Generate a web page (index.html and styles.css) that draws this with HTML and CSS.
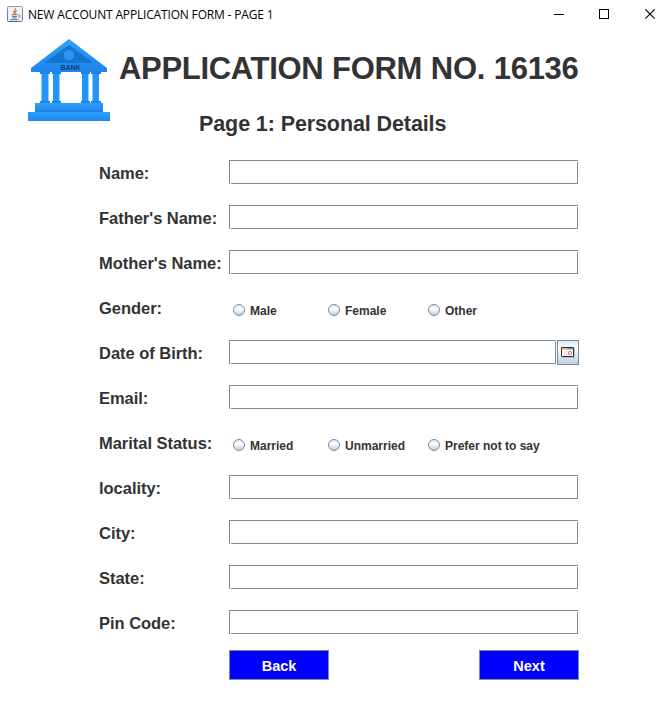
FILE: index.html
```html
<!DOCTYPE html>
<html lang="en">
<head>
<meta charset="utf-8">
<title>NEW ACCOUNT APPLICATION FORM - PAGE 1</title>
<link rel="stylesheet" href="styles.css">
</head>
<body>
<header class="titlebar">
  <svg class="java" width="16" height="16" viewBox="0 0 16 16" fill="none">
    <defs><linearGradient id="tile" x1="0" y1="0" x2="0" y2="1"><stop stop-color="#8b9dab"/><stop offset="1" stop-color="#54718a"/></linearGradient></defs>
    <rect x=".5" y=".5" width="15" height="15" rx="1" fill="#eef2f5" stroke="url(#tile)"/>
    <path d="M8.500 2C9.500 4 5 5 7.500 8M10 4.500C7.500 5.500 8 6.500 9 7.500" stroke="#e87524" stroke-width="1.200"/>
    <path d="M4.500 8.700h6M5 10.500h5M5.500 12h4M3 13.700h8.500M11 9c3-.5 2.500 2 .2 2.600" stroke="#54718a" stroke-width=".9"/>
  </svg>
  <span class="caption">NEW ACCOUNT APPLICATION FORM - PAGE 1</span>
  <svg class="controls" width="102" height="11" viewBox="0 0 102 11" fill="none" stroke="#000">
    <path d="M0 5.500h10"/><rect x="45.500" y=".5" width="9" height="9"/><path d="M91.300.3l9.400 9.400M100.700.3l-9.400 9.400" stroke-width="1.100"/>
  </svg>
</header>
<main>
  <div class="heading">
    <svg class="bank" width="82" height="83" viewBox="0 0 82 83">
      <defs><linearGradient id="blue" x1="0" y1="0" x2="0" y2="1"><stop stop-color="#2ba0fb"/><stop offset="1" stop-color="#2185ec"/></linearGradient></defs>
      <path d="M41 0L79 29v4H3v-4z" fill="url(#blue)"/>
      <path d="M41 6L66 24H16z" fill="#1576cf"/>
      <circle cx="41" cy="16" r="5.300" fill="#2894f3"/>
      <g fill="#1c83e8"><path d="M12 33h10v2H12zM24 33h9v2h-9zM53 33h9v2h-9zM63 33h10v2H63z"/><path d="M12 62h10v2H12zM24 62h9v2h-9zM53 62h9v2h-9zM63 62h10v2H63z"/></g>
      <g fill="#2395fa"><path d="M13.500 35h7v27h-7zM25 35h6.500v27H25zM54 35h6.500v27H54zM64.500 35H71v27h-6.500z"/></g>
      <path d="M7 64h68v9H7z" fill="url(#blue)"/><path d="M0 73h82v9H0z" fill="url(#blue)"/>
      <path d="M7 72h68v1H7z" fill="#1c7bdd"/>
      <text x="32.500" y="30.500" textLength="20" class="sign">BANK</text>
    </svg>
    <h1>APPLICATION FORM NO. 16136</h1>
  </div>
  <h2>Page 1: Personal Details</h2>
  <form>
    <div class="row"><label>Name:</label><input class="field" type="text"></div>
    <div class="row"><label>Father's Name:</label><input class="field" type="text"></div>
    <div class="row"><label>Mother's Name:</label><input class="field" type="text"></div>
    <div class="row"><label>Gender:</label><div class="options"><span class="option"><i class="radio"></i>Male</span><span class="option"><i class="radio"></i>Female</span><span class="option"><i class="radio"></i>Other</span></div></div>
    <div class="row"><label>Date of Birth:</label><input class="field date" type="text"><button class="calendar" type="button" aria-label="Choose date"><svg width="15" height="12" viewBox="0 0 15 12"><path d="M1.500 1.500h12.500v9.500H1.500z" fill="#b4bcc4"/><path d="M.5.5h12v9H.5z" fill="#fff" stroke="#333"/><path d="M1 1h5v1.500H1z" fill="#f5b13d"/><path d="M6 1h6v1.500H6z" fill="#5e96dc"/><path d="M3.500 4v5M5.500 4v5" stroke="#ddd"/><circle cx="9" cy="6" r="1.600" fill="none" stroke="#ef6060"/></svg></button></div>
    <div class="row"><label>Email:</label><input class="field" type="text"></div>
    <div class="row"><label>Marital Status:</label><div class="options"><span class="option"><i class="radio"></i>Married</span><span class="option"><i class="radio"></i>Unmarried</span><span class="option"><i class="radio"></i>Prefer not to say</span></div></div>
    <div class="row"><label>locality:</label><input class="field" type="text"></div>
    <div class="row"><label>City:</label><input class="field" type="text"></div>
    <div class="row"><label>State:</label><input class="field" type="text"></div>
    <div class="row"><label>Pin Code:</label><input class="field" type="text"></div>
    <div class="actions"><button class="nav" type="button">Back</button><button class="nav" type="button">Next</button></div>
  </form>
</main>
</body>
</html>
```

FILE: styles.css
```css
* { box-sizing: border-box; }
body { margin: 0; height: 711px; overflow: hidden; background: #fff; color: #333; font-family: "Liberation Sans", sans-serif; }
.titlebar { display: flex; height: 30px; padding: 6px 0 0 7px; color: #000; }
.caption { margin-left: 5px; width: 526px; font: 12px/17px "Open Sans", sans-serif; letter-spacing: -0.17px; white-space: nowrap; }
.controls { margin: 3px 0 0; }
.heading { display: flex; height: 93px; padding: 9px 0 0 28px; }
.bank { flex: none; }
.sign { font: bold 7px "Liberation Sans", sans-serif; fill: #0b3c78; }
h1 { margin: 11px 0 0 9px; font-size: 31px; line-height: 38px; letter-spacing: -0.32px; word-spacing: 0.5px; white-space: nowrap; }
h2 { margin: -12px 0 0 199px; font-size: 21.5px; line-height: 26px; letter-spacing: -0.1px; }
form { margin: 23px 0 0 99px; }
.row { display: flex; height: 45px; }
.row label { width: 130px; padding-top: 4px; font-weight: bold; font-size: 16.5px; line-height: 18px; letter-spacing: -0.03px; white-space: nowrap; }
.field {
  width: 349px; height: 24px; margin: 0; padding: 2px 4px; border: 0; border-radius: 0; outline: none;
  font: 12px "Liberation Sans", sans-serif;
  background:
    linear-gradient(#7a8a99, #7a8a99) left top / 100% 1px no-repeat,
    linear-gradient(#7a8a99, #7a8a99) left top / 1px 100% no-repeat,
    linear-gradient(#7a8a99, #7a8a99) right bottom / calc(100% - 2px) 1px no-repeat,
    linear-gradient(#7a8a99, #7a8a99) right bottom / 1px calc(100% - 2px) no-repeat,
    #fff;
}
.field.date { width: 327px; }
.calendar { display: flex; align-items: center; justify-content: center; width: 22px; height: 25px; margin: 0 0 0 1px; padding: 0; border: 1px solid #7a8a99; background: linear-gradient(#dde8f3, #fff 35%, #b8cfe5); }
.options { display: grid; grid-template-columns: 95px 100px auto; height: 14px; margin: 9px 0 0 4px; font: bold 12px/14px "Liberation Sans", sans-serif; }
.option { display: flex; align-items: flex-start; padding-top: 1px; line-height: 13px; white-space: nowrap; }
.radio { width: 12px; height: 12px; margin: -1px 5px 0 0; border: 1px solid #7a8a99; border-radius: 50%; background: linear-gradient(#dde8f3, #fff 40%, #b8cfe5); }
.actions { display: flex; justify-content: space-between; width: 350px; margin: -5px 0 0 130px; }
.nav { width: 100px; height: 30px; padding: 2px 0 0; border: 1px solid #7a8a99; background: #00f; color: #fff; font: bold 14.5px "Liberation Sans", sans-serif; }
```
